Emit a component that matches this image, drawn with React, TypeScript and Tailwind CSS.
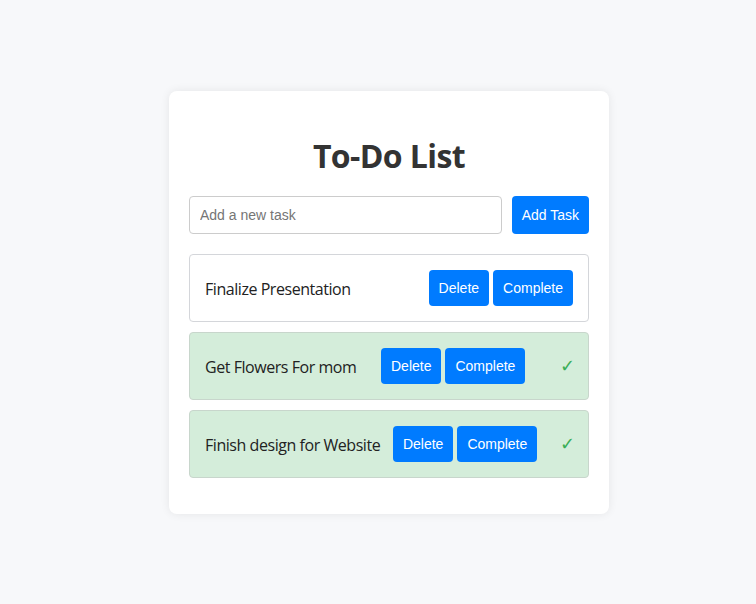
const tasks = [
  { id: 1, text: "Finalize Presentation", done: false },
  { id: 2, text: "Get Flowers For mom", done: true },
  { id: 3, text: "Finish design for Website", done: true },
];

const btn =
  "bg-[#007bff] text-white text-[14px] leading-4 px-[10px] py-[10px] rounded-[4px] font-['Liberation_Sans',Arial,sans-serif]";

export default function App() {
  return (
    <div className="min-h-screen bg-[#f7f8fa] flex items-center justify-center pl-[22px]">
      <div className="w-[440px] bg-white rounded-[8px] shadow-[0_0_10px_rgba(0,0,0,0.08)] px-5 pt-5 pb-[36px]">
        <h1 className="mt-[26px] mb-[21px] text-center text-[32px] leading-[38px] font-bold tracking-[-0.6px] text-[#333] font-['Open_Sans','Noto_Sans',sans-serif]">
          To-Do List
        </h1>

        <div className="flex gap-[10px]">
          <input
            type="text"
            placeholder="Add a new task"
            className="flex-1 h-[38px] px-[10px] border border-[#ccc] rounded-[4px] text-[14px] font-['Liberation_Sans',Arial,sans-serif] placeholder:text-[#757575] outline-none"
          />
          <button className={btn}>Add Task</button>
        </div>

        <ul className="mt-5 flex flex-col gap-[10px]">
          {tasks.map((t) => (
            <li
              key={t.id}
              className={`h-[68px] flex items-center justify-between px-[15px] border rounded-[4px] ${
                t.done ? "bg-[#d4edda] border-[#c8d6cc]" : "bg-white border-[#d4d6da]"
              }`}
            >
              <span className="text-[16px] tracking-[-0.45px] text-[#222] pt-[2px] font-['Open_Sans','Noto_Sans',sans-serif]">
                {t.text}
              </span>
              <div className="flex gap-[4px]">
                <button className={btn}>Delete</button>
                <button className={btn}>Complete</button>
              </div>
              {t.done && (
                <span className="w-[25px] flex justify-end -mr-[2px] text-[18px] text-[#3aae57] font-['DejaVu_Sans',sans-serif]">
                  ✓
                </span>
              )}
            </li>
          ))}
        </ul>
      </div>
    </div>
  );
}
